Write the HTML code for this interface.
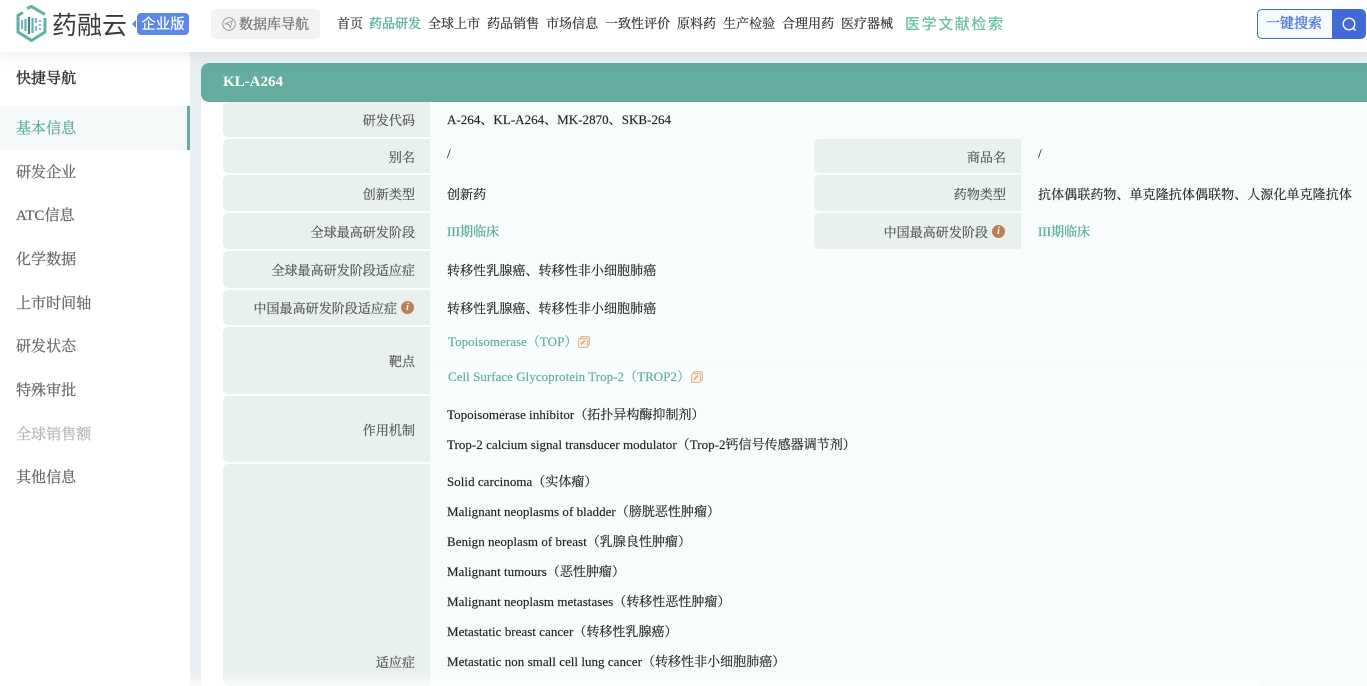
<!DOCTYPE html>
<html lang="zh"><head><meta charset="utf-8"><title>KL-A264</title>
<style>
*{box-sizing:border-box;margin:0;padding:0}
html,body{width:1367px;height:686px;overflow:hidden;background:#e9eef2}
body{position:relative;font-family:"Liberation Serif","Noto Serif CJK SC",serif;font-size:13px;color:#333}
.a{position:absolute;white-space:nowrap}
.hd{position:absolute;left:0;top:0;width:1367px;height:52px;background:#fff;z-index:5;box-shadow:0 2px 12px rgba(120,130,150,.18)}
.nav{position:absolute;top:15px;font-size:13px;line-height:18px;color:#333;white-space:nowrap;letter-spacing:.03px;-webkit-text-stroke:.2px}
.side{position:absolute;left:0;top:52px;width:190px;height:634px;background:#fff}
.si{position:absolute;left:16px;font-size:15px;line-height:22px;color:#666;white-space:nowrap;letter-spacing:.05px;-webkit-text-stroke:.25px}
.main{position:absolute;left:201px;top:90px;width:1166px;height:596px;background:#fff}
.bar{position:absolute;left:201px;top:63px;width:1166px;height:39px;background:#63ac9f;border-radius:8px 0 0 8px;color:#fff;font-weight:700;font-size:15px;line-height:39px;padding-left:22px}
.valbg{position:absolute;background:#f8fcfd}
.l{position:absolute;background:#e9f1f0;color:#555;text-align:right;padding-right:15px;display:flex;align-items:center;justify-content:flex-end;border-radius:5px 0 0 5px;white-space:nowrap;font-size:13px;letter-spacing:.05px;-webkit-text-stroke:.2px}
.v{position:absolute;white-space:nowrap;color:#222;font-size:13px;line-height:18px;letter-spacing:.03px;-webkit-text-stroke:.15px}
.c{letter-spacing:.08px}
.g{color:#5aaf9e}
.b{-webkit-text-stroke:.35px}
.i{display:inline-block;width:13px;height:13px;border-radius:50%;background:#bd7f58;color:#fff;font:italic 700 10px/13px "Liberation Serif",serif;text-align:center;margin-left:4px;flex:none;-webkit-text-stroke:0}
.lk{display:inline-block;vertical-align:-2px;margin-left:1px}
</style></head><body>

<div class="main"></div>
<div class="valbg" style="left:430px;top:102px;width:937px;height:584px"></div>
<div class="a" style="left:803px;top:139px;width:11px;height:110px;background:#fbfdfd"></div>

<div class="bar">KL-A264</div>

<div class="l" style="left:223px;top:102px;width:207px;height:35px">研发代码</div>
<div class="l" style="left:223px;top:139px;width:207px;height:34px">别名</div>
<div class="l" style="left:223px;top:175px;width:207px;height:36px">创新类型</div>
<div class="l" style="left:223px;top:213px;width:207px;height:36px">全球最高研发阶段</div>
<div class="l" style="left:223px;top:251px;width:207px;height:37px">全球最高研发阶段适应症</div>
<div class="l" style="left:223px;top:290px;width:207px;height:35px;padding-right:16px">中国最高研发阶段适应症<span class="i">i</span></div>
<div class="l" style="left:223px;top:327px;width:207px;height:67px">靶点</div>
<div class="l" style="left:223px;top:396px;width:207px;height:66px">作用机制</div>
<div class="l" style="left:223px;top:464px;width:207px;height:222px;padding-top:172px">适应症</div>

<div class="l" style="left:814px;top:139px;width:207px;height:34px">商品名</div>
<div class="l" style="left:814px;top:175px;width:207px;height:36px">药物类型</div>
<div class="l" style="left:814px;top:213px;width:207px;height:36px;padding-right:16px">中国最高研发阶段<span class="i">i</span></div>

<div class="v" style="left:447px;top:111px">A-264、KL-A264、MK-2870、SKB-264</div>
<div class="v" style="left:447px;top:145px">/</div>
<div class="v" style="left:1038px;top:145px">/</div>
<div class="v c" style="left:447px;top:186px">创新药</div>
<div class="v c" style="left:1038px;top:186px">抗体偶联药物、单克隆抗体偶联物、人源化单克隆抗体</div>
<div class="v g b" style="left:447px;top:223px">III期临床</div>
<div class="v g b" style="left:1038px;top:223px">III期临床</div>
<div class="v c" style="left:447px;top:262px">转移性乳腺癌、转移性非小细胞肺癌</div>
<div class="v c" style="left:447px;top:300px">转移性乳腺癌、转移性非小细胞肺癌</div>

<div class="a" style="left:430px;top:360px;width:937px;height:1px;background:#f4f8f9"></div>
<div class="v g" style="left:448px;top:333px">Topoisomerase（TOP）<svg class="lk" width="12" height="12" viewBox="0 0 12 12"><rect x="2.500" y=".5" width="9" height="9" rx="1.500" fill="#f3e3d3" stroke="#e0b98f"/><rect x=".5" y="2.500" width="9" height="9" rx="1.500" fill="#f8ece0" stroke="#e0b98f"/><path d="M3 8.500l4-4" stroke="#cf9a68" stroke-width="1.200"/></svg></div>
<div class="v g" style="left:448px;top:368px">Cell Surface Glycoprotein Trop-2（TROP2）<svg class="lk" width="12" height="12" viewBox="0 0 12 12"><rect x="2.500" y=".5" width="9" height="9" rx="1.500" fill="#f3e3d3" stroke="#e0b98f"/><rect x=".5" y="2.500" width="9" height="9" rx="1.500" fill="#f8ece0" stroke="#e0b98f"/><path d="M3 8.500l4-4" stroke="#cf9a68" stroke-width="1.200"/></svg></div>

<div class="v" style="left:447px;top:406px">Topoisomerase inhibitor（拓扑异构酶抑制剂）</div>
<div class="v" style="left:447px;top:436px">Trop-2 calcium signal transducer modulator（Trop-2钙信号传感器调节剂）</div>

<div class="v" style="left:447px;top:473px">Solid carcinoma（实体瘤）</div>
<div class="v" style="left:447px;top:503px">Malignant neoplasms of bladder（膀胱恶性肿瘤）</div>
<div class="v" style="left:447px;top:533px">Benign neoplasm of breast（乳腺良性肿瘤）</div>
<div class="v" style="left:447px;top:563px">Malignant tumours（恶性肿瘤）</div>
<div class="v" style="left:447px;top:593px">Malignant neoplasm metastases（转移性恶性肿瘤）</div>
<div class="v" style="left:447px;top:623px">Metastatic breast cancer（转移性乳腺癌）</div>
<div class="v" style="left:447px;top:653px">Metastatic non small cell lung cancer（转移性非小细胞肺癌）</div>
<div class="a" style="left:150px;top:672px;width:1110px;height:14px;background:linear-gradient(rgba(255,255,255,0),rgba(255,255,255,.7))"></div>

<div class="side">
<div class="si" style="top:16px;color:#333;font-size:15px;-webkit-text-stroke:.4px">快捷导航</div>
<div class="a" style="left:0;top:54px;width:190px;height:44px;background:#f4f8f9;border-right:3px solid #63ac9f"></div>
<div class="si g" style="top:66px">基本信息</div>
<div class="si" style="top:110px">研发企业</div>
<div class="si" style="top:153px">ATC信息</div>
<div class="si" style="top:197px">化学数据</div>
<div class="si" style="top:241px">上市时间轴</div>
<div class="si" style="top:284px">研发状态</div>
<div class="si" style="top:328px">特殊审批</div>
<div class="si" style="top:372px;color:#b5b5b5">全球销售额</div>
<div class="si" style="top:415px">其他信息</div>
</div>

<div class="hd">
<svg class="a" style="left:15px;top:5px" width="33" height="38" viewBox="0 0 33 38" fill="none"><path d="M12 3.500L16.500 1.500 30 9.500M30 13V27L16.500 35.500 3 27V10.500L8 7.500" stroke="#5fb3a3" stroke-width="3"/><g stroke-width="2.200"><path d="M7 15v9" stroke="#7db2e8"/><path d="M10.500 14v12" stroke="#5fb3a3"/><path d="M14 12v17" stroke="#3f7f90"/><path d="M17.500 13v15" stroke="#5fb3a3"/><path d="M21 13v5M21 21v5" stroke="#7db2e8"/><path d="M25 15v2M25 19v2M25 23v2" stroke="#7db2e8"/></g></svg>
<div class="a" style="left:52px;top:6px;font:400 25px/36px 'Noto Sans CJK SC',sans-serif;color:#3a3a3a">药融云</div>
<div class="a" style="left:137px;top:13px;width:52px;height:22px;background:#5b86ee;border-radius:4px;color:#fff;font:500 14.500px/22px 'Noto Sans CJK SC',sans-serif;text-align:center">企业版</div>
<div class="a" style="left:132px;top:20px;border:4px solid transparent;border-right:4px solid #5b86ee;border-left:0"></div>
<div class="a" style="left:211px;top:9px;width:109px;height:30px;background:#f2f3f4;border-radius:4px"></div>
<svg class="a" style="left:222px;top:17px" width="14" height="14" viewBox="0 0 14 14" fill="none"><circle cx="7" cy="7" r="6.300" stroke="#999"/><path d="M3.500 6.800L10.300 3.800 8.300 10.500 6.800 7.500z" stroke="#999" fill="none" stroke-width=".9"/></svg>
<div class="a" style="left:239px;top:15px;font-size:14px;line-height:22px;color:#777;-webkit-text-stroke:.35px">数据库导航</div>

<div class="nav" style="left:337px">首页</div>
<div class="nav g" style="left:369px;-webkit-text-stroke:.4px">药品研发</div>
<div class="nav" style="left:428px">全球上市</div>
<div class="nav" style="left:487px">药品销售</div>
<div class="nav" style="left:546px">市场信息</div>
<div class="nav" style="left:605px">一致性评价</div>
<div class="nav" style="left:677px">原料药</div>
<div class="nav" style="left:723px">生产检验</div>
<div class="nav" style="left:782px">合理用药</div>
<div class="nav" style="left:841px">医疗器械</div>
<div class="a" style="left:905px;top:14px;font:500 15px/20px 'Noto Sans CJK SC',sans-serif;letter-spacing:1.600px;color:#68c0a4">医学文献检索</div>

<div class="a" style="left:1257px;top:9px;width:109px;height:30px;border:1px solid #4169d8;border-radius:5px;background:#f6f9ff;overflow:hidden">
<div class="a" style="left:8px;top:5px;font-size:14px;line-height:20px;color:#4a72d8;-webkit-text-stroke:.35px">一键搜索</div>
<div class="a" style="left:74px;top:0;width:34px;height:28px;background:#4169d8"></div>
<svg class="a" style="left:83px;top:6px" width="17" height="17" viewBox="0 0 17 17" fill="none"><circle cx="8" cy="8" r="5.800" stroke="#fff" stroke-width="1.400"/><path d="M12.200 12.200L14.500 14.500" stroke="#fff" stroke-width="1.400"/></svg>
</div>
</div>
</body></html>
